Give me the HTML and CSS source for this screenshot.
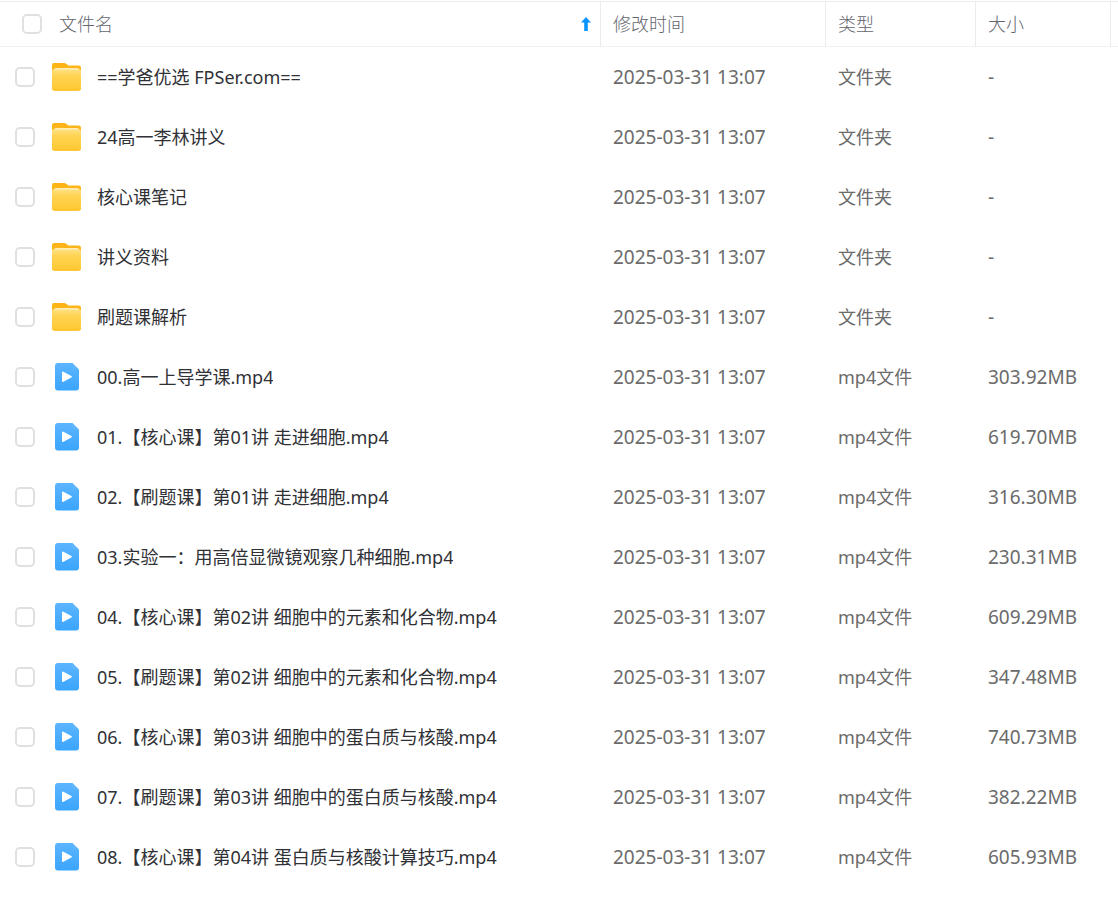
FILE: index.html
```html
<!DOCTYPE html>
<html lang="zh-CN">
<head>
    <meta charset="UTF-8">
    <meta name="viewport" content="width=device-width, initial-scale=1.0">
    <title>文件列表</title>
    <link rel="stylesheet" href="styles.css">
</head>
<body>
    <svg class="sprite" aria-hidden="true">
        <defs>
            <linearGradient id="folder-back" x1="0" y1="0" x2="0" y2="1">
                <stop offset="0" stop-color="#fdb316"/>
                <stop offset="1" stop-color="#ffc02e"/>
            </linearGradient>
            <linearGradient id="folder-front" x1="0" y1="0" x2="0" y2="1">
                <stop offset="0" stop-color="#ffe184"/>
                <stop offset="0.3" stop-color="#ffd453"/>
                <stop offset="1" stop-color="#ffc833"/>
            </linearGradient>
            <linearGradient id="video-bg" x1="0" y1="0" x2="0" y2="1">
                <stop offset="0" stop-color="#5cb5ff"/>
                <stop offset="1" stop-color="#3ba5fd"/>
            </linearGradient>
        </defs>
        <symbol id="folder" viewBox="0 0 30 28">
            <path fill="url(#folder-back)" d="M2 0H12Q13.500 0 14.500 1L16.500 2.500H26.500Q29 2.500 29 5V25Q29 27.500 26.500 27.500H2.500Q0 27.500 0 25V2Q0 0 2 0Z"/>
            <path fill="#ffedb5" d="M4 5H25.500Q27 5 27 6.500V9H2V7Q2 5 4 5Z"/>
            <path fill="url(#folder-front)" d="M0 7.500Q0 6.500 2 6.500H27Q29 6.500 29 7.500V25Q29 27.500 26.500 27.500H2.500Q0 27.500 0 25Z"/>
            <path fill="#ffbd1c" d="M0.200 25.500Q0.800 27.500 2.500 27.500H26.500Q28.200 27.500 28.800 25.500Q28 26.500 26.500 26.500H2.500Q1 26.500 0.200 25.500Z"/>
        </symbol>
        <symbol id="video" viewBox="0 0 30 28">
            <path fill="url(#video-bg)" d="M6 0H20.500L27 6.500V24.500Q27 27.500 24 27.500H6Q3 27.500 3 24.500V3Q3 0 6 0Z"/>
            <path fill="#8bcbff" d="M20.500 0L27 6.500H23Q20.500 6.500 20.500 4Z" opacity="0.150"/>
            <path fill="#fff" d="M10 9.500Q10 8 11.400 8.700L19.400 13Q20.500 13.700 19.400 14.400L11.400 18.800Q10 19.500 10 18Z"/>
        </symbol>
    </svg>

    <table class="file-table">
        <colgroup>
            <col>
            <col class="col-time">
            <col class="col-type">
            <col class="col-size">
            <col class="col-end">
        </colgroup>
        <thead>
            <tr>
                <th>
                    <div class="head-name">
                        <input type="checkbox" class="check" id="check-all">
                        <label for="check-all">文件名</label>
                        <svg class="sort" viewBox="0 0 10 14" aria-hidden="true"><path d="M5 0L10 5.500H6.800V14H3.200V5.500H0Z" fill="#0a94ff"/></svg>
                    </div>
                </th>
                <th>修改时间</th>
                <th>类型</th>
                <th>大小</th>
                <th></th>
            </tr>
        </thead>
        <tbody id="file-list"></tbody>
    </table>

    <script src="script.js"></script>
</body>
</html>
```
FILE: styles.css
```css
body {
    margin: 0;
    background-color: #fff;
    font-family: "Noto Sans", "Noto Sans CJK SC", sans-serif;
    font-size: 18px;
    font-weight: 400;
    color: #6b6b6b;
}
.sprite {
    position: absolute;
    width: 0;
    height: 0;
}
.file-table {
    width: 100%;
    margin-top: 1px;
    table-layout: fixed;
    border-collapse: separate;
    border-spacing: 0;
    line-height: 24px;
}
.col-time {
    width: 225px;
}
.col-type {
    width: 150px;
}
.col-size {
    width: 135px;
}
.col-end {
    width: 7px;
}
.file-table th {
    box-sizing: border-box;
    height: 46px;
    padding: 0 12px;
    border-top: 1px solid #ebebeb;
    border-bottom: 1px solid #f2f2f2;
    border-right: 1px solid #ebebeb;
    font-weight: 300;
    text-align: left;
    color: #63666f;
}
.file-table th:first-child {
    padding: 0 9px 0 22px;
}
.file-table th:last-child {
    padding: 0;
    border-right: 0;
}
.file-table td {
    height: 60px;
    padding: 0 12px;
    white-space: nowrap;
}
.file-table td:first-child {
    padding: 0 12px 0 15px;
}
.file-table td:last-child {
    padding: 0;
}
.file-table .num {
    font-size: 19px;
}
.head-name,
.file-name {
    display: flex;
    align-items: center;
}
.head-name label {
    flex: 1;
    margin-left: 17px;
}
.sort {
    width: 10px;
    height: 14px;
}
.check {
    appearance: none;
    box-sizing: border-box;
    flex: none;
    width: 20px;
    height: 20px;
    margin: 0;
    border: 2px solid #e0e0e0;
    border-radius: 5px;
    background-color: #fff;
}
.check:checked {
    border-color: #0a94ff;
    background-color: #0a94ff;
}
.icon {
    flex: none;
    width: 30px;
    height: 28px;
    margin: 0 15px 0 17px;
}
.file-name a {
    overflow: hidden;
    text-overflow: ellipsis;
    color: #303136;
    text-decoration: none;
}
.file-name a:hover {
    color: #0a94ff;
}
```
FILE: script.js
```js
const files = [
    { name: '==学爸优选 FPSer.com==' },
    { name: '24高一李林讲义' },
    { name: '核心课笔记' },
    { name: '讲义资料' },
    { name: '刷题课解析' },
    { name: '00.高一上导学课.mp4', size: '303.92MB' },
    { name: '01.【核心课】第01讲 走进细胞.mp4', size: '619.70MB' },
    { name: '02.【刷题课】第01讲 走进细胞.mp4', size: '316.30MB' },
    { name: '03.实验一：用高倍显微镜观察几种细胞.mp4', size: '230.31MB' },
    { name: '04.【核心课】第02讲 细胞中的元素和化合物.mp4', size: '609.29MB' },
    { name: '05.【刷题课】第02讲 细胞中的元素和化合物.mp4', size: '347.48MB' },
    { name: '06.【核心课】第03讲 细胞中的蛋白质与核酸.mp4', size: '740.73MB' },
    { name: '07.【刷题课】第03讲 细胞中的蛋白质与核酸.mp4', size: '382.22MB' },
    { name: '08.【核心课】第04讲 蛋白质与核酸计算技巧.mp4', size: '605.93MB' }
];

// entries without a size are folders
document.getElementById('file-list').innerHTML = files.map((file, i) => `
    <tr>
        <td>
            <div class="file-name">
                <input type="checkbox" class="check" aria-labelledby="file-${i}">
                <svg class="icon" aria-hidden="true"><use href="#${file.size ? 'video' : 'folder'}"/></svg>
                <a href="#" id="file-${i}">${file.name}</a>
            </div>
        </td>
        <td class="num">2025-03-31 13:07</td>
        <td>${file.size ? 'mp4文件' : '文件夹'}</td>
        <td class="num">${file.size || '-'}</td>
        <td></td>
    </tr>
`).join('');

const checkAll = document.getElementById('check-all');
checkAll.addEventListener('change', () => {
    document.querySelectorAll('#file-list .check').forEach(box => {
        box.checked = checkAll.checked;
    });
});
```
